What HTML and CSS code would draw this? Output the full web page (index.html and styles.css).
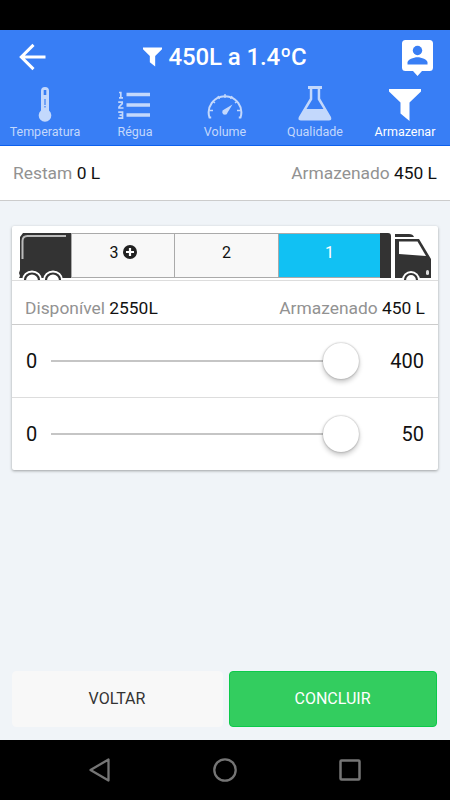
FILE: index.html
```html
<!DOCTYPE html>
<html lang="pt-BR">
<head>
<meta charset="utf-8">
<title>Armazenar</title>
<link rel="stylesheet" href="styles.css">
</head>
<body>
<div class="status"></div>
<header class="header">
  <div class="titlebar">
    <svg class="back" width="28" height="28" viewBox="0 0 28 28"><path d="M15.500 1.900 3.300 14l12.200 12.100M3.500 14h24" fill="none" stroke="#fff" stroke-width="3"/></svg>
    <h1 class="title"><svg width="19" height="20" viewBox="0 0 32 32"><path d="M0 0h32v3L20.500 14.500V32L11.500 25V14.500L0 3z" fill="#fff"/></svg><span>450L a 1.4ºC</span></h1>
    <svg class="account" width="32" height="37" viewBox="0 0 32 37"><path fill="#fff" d="M3.500 0h24Q31 0 31 3.500v24Q31 31 27.500 31H20l-4.500 5-4.500-5H3.500Q0 31 0 27.500v-24Q0 0 3.500 0z"/><circle cx="15.500" cy="10.500" r="4.700" fill="#387ef5"/><path fill="#387ef5" d="M5.500 24.500v-2c0-3 6-5.300 10-5.300s10 2.300 10 5.300v2z"/></svg>
  </div>
  <nav class="tabs">
    <a class="tab"><svg width="36" height="38" viewBox="0 0 36 38"><path fill="#c3d8fc" fill-rule="evenodd" d="M14 6a4 4 0 0 1 8 0v19.500a6.300 6.300 0 1 1-8 0zM16.700 5v5h2.600V5zM17.400 14v6h1.200v-6zM17.400 21v1.500h1.200V21z"/></svg><span>Temperatura</span></a>
    <a class="tab"><svg width="36" height="38" viewBox="0 0 36 38"><path d="M9.500 9.500H33M9.500 20H33M9.500 30H33" stroke="#c3d8fc" stroke-width="3.500"/><path d="M2 7.500h1.800V13M2 12.800h4M1.200 17.200h4v1.500L2 22v1h4.500M1.200 27.200H5.500v6H1.200M2.500 30.100h3" fill="none" stroke="#c3d8fc" stroke-width="1.700"/></svg><span>Régua</span></a>
    <a class="tab"><svg width="36" height="38" viewBox="0 0 36 38"><path d="M4.200 32.500H2.500A16.300 16.300 0 1 1 33.500 32.500H31.800" fill="none" stroke="#c3d8fc" stroke-width="2"/><path d="M2.500 25.500h3.500M5.500 16l2.500 2M11 11l1.500 2.800M18 9v4M25 11l-1.500 2.800M30.500 16l-2.500 2M33.500 25.500H30" stroke="#c3d8fc" stroke-width="1.400"/><path d="M25.500 19.500 20.600 27.500a2.700 2.700 0 1 1-3.500-3z" fill="#c3d8fc"/></svg><span>Volume</span></a>
    <a class="tab"><svg width="36" height="38" viewBox="0 0 36 38"><path fill="#c3d8fc" fill-rule="evenodd" d="M11 1h14v3h-1.800v9.500L34 32q1.200 3.500-2.200 3.500H4q-3.500 0-2.200-3.500L12.800 13.500V4H11zM15.300 4v10.500L9.500 24h17L20.700 14.500V4z"/></svg><span>Qualidade</span></a>
    <a class="tab active"><svg width="36" height="38" viewBox="0 0 36 38"><path d="M2 4h32v2.500L22.500 17.500V36L13.500 28.500V17.500L2 6.500z" fill="#fff"/></svg><span>Armazenar</span></a>
  </nav>
</header>
<section class="summary"><div>Restam <b>0 L</b></div><div>Armazenado <b>450 L</b></div></section>
<main class="content">
  <section class="card">
    <div class="truck">
      <svg width="52" height="47" viewBox="0 0 52 47"><path d="M4 0h48v45H0l1-2-1-3 1-3V4z" fill="#333"/><path d="M3.500 26V8q0-5 5-5H47" fill="none" stroke="#bbb" stroke-width="2"/><path d="M3 47a10 9.500 0 0 1 20 0zM24 47a10 9.500 0 0 1 20 0z" fill="#fff"/><path d="M6 47a7 6.500 0 0 1 14 0M27 47a7 6.500 0 0 1 14 0" fill="none" stroke="#333" stroke-width="2.200"/></svg>
      <div class="tanks">
        <div class="tank"><span>3</span><svg width="14" height="14" viewBox="0 0 14 14"><circle cx="7" cy="7" r="7" fill="#222"/><path d="M7 3v8M3 7h8" stroke="#fff" stroke-width="2.200"/></svg></div>
        <div class="tank">2</div>
        <div class="tank selected">1</div>
      </div>
      <svg width="52" height="47" viewBox="0 0 52 47"><path d="M0 0h8q3 0 3 3v42H0zM15 1h14q4 0 5 3H15z" fill="#333"/><path fill="#333" d="M15 6h24l12 20v19H15z"/><path d="M19 8.500h18.500l8.500 14.500L19 21z" fill="#fff"/><rect x="46" y="37" width="3" height="5" rx="1.500" fill="#ddd"/><path d="M22 47a9 9 0 0 1 18 0z" fill="#fff"/><path d="M25 47a6 6 0 0 1 12 0" fill="none" stroke="#333" stroke-width="2.200"/></svg>
    </div>
    <div class="available"><div>Disponível <b>2550L</b></div><div>Armazenado <b>450 L</b></div></div>
    <div class="range"><span>0</span><div class="track"><i class="thumb"></i></div><span class="value">400</span></div>
    <div class="range"><span>0</span><div class="track"><i class="thumb"></i></div><span class="value">50</span></div>
  </section>
  <div class="actions"><button class="button">VOLTAR</button><button class="button confirm">CONCLUIR</button></div>
</main>
<footer class="android">
  <svg width="24" height="26" viewBox="0 0 24 26"><path d="M20.500 2.500v21L2.500 13z" fill="none" stroke="#757575" stroke-width="2.300" stroke-linejoin="round"/></svg>
  <svg width="24" height="26" viewBox="0 0 24 26"><circle cx="12" cy="13" r="10.700" fill="none" stroke="#757575" stroke-width="2.300"/></svg>
  <svg width="24" height="26" viewBox="0 0 24 26"><rect x="2.500" y="3.500" width="19" height="19" rx="1" fill="none" stroke="#757575" stroke-width="2.500"/></svg>
</footer>
</body>
</html>
```
FILE: styles.css
```css
* { box-sizing: border-box; }
body {
  margin: 0;
  width: 450px;
  height: 800px;
  overflow: hidden;
  display: flex;
  flex-direction: column;
  font-family: Roboto, sans-serif;
  background: #f0f4f8;
  color: #111;
}
svg { display: block; flex: none; }
b { font-weight: 400; color: #111; }
.status { height: 30px; background: #000; }
.header { height: 116px; background: #387ef5; border-bottom: 1px solid #0c60ee; color: #fff; }
.titlebar {
  height: 55px;
  display: grid;
  grid-template-columns: 60px 1fr 60px;
  align-items: center;
}
.back { margin: -1px 0 0 18px; }
.account { margin: 2px 0 0 12px; }
.title {
  margin: -2px 0 0;
  display: flex;
  justify-content: center;
  align-items: center;
  gap: 6px;
  font-size: 24px;
  font-weight: 500;
  letter-spacing: -.1px;
}
.tabs { display: grid; grid-template-columns: repeat(5, 1fr); }
.tab {
  display: flex;
  flex-direction: column;
  align-items: center;
  font-size: 12.5px;
  line-height: 18px;
  color: #c3d8fc;
}
.tab.active { color: #fff; }
.summary, .available {
  display: flex;
  justify-content: space-between;
  align-items: center;
  font-size: 17.4px;
  color: #929292;
}
.summary { height: 55px; padding: 0 13px 1px; background: #fff; border-bottom: 1px solid #ccc; }
.content { height: 539px; padding: 25px 12px 13px; display: flex; flex-direction: column; justify-content: space-between; }
.card {
  height: 244px;
  background: #fff;
  border-radius: 2px;
  box-shadow: 0 1px 3px rgba(0, 0, 0, .35);
}
.truck { height: 55px; padding: 7px 6px 0 7px; display: flex; border-bottom: 1px solid #ddd; }
.tanks {
  flex: 1;
  height: 45px;
  display: grid;
  grid-template-columns: 102px 104px 1fr;
  border: 1px solid #aaa;
  border-right: 0;
}
.tank {
  display: flex;
  justify-content: center;
  align-items: center;
  gap: 4px;
  padding-bottom: 7px;
  background: #f8f8f8;
  font-size: 16px;
}
.tank + .tank { border-left: 1px solid #aaa; }
.tank.selected { background: #11c1f3; color: #fff; }
.available { height: 44px; padding: 10px 13px 0; border-bottom: 1px solid #ccc; }
.range {
  height: 72px;
  padding: 0 14px;
  display: grid;
  grid-template-columns: 25px 308px 1fr;
  align-items: center;
  font-size: 20px;
}
.range + .range { border-top: 1px solid #ddd; height: 73px; }
.track { height: 2px; display: flex; align-items: center; justify-content: flex-end; background: #c5c5c5; }
.thumb {
  flex: none;
  width: 36px;
  height: 36px;
  border-radius: 50%;
  background: #fff;
  box-shadow: 0 0 2px rgba(0, 0, 0, .35), 0 3px 5px rgba(0, 0, 0, .22);
}
.value { text-align: right; }
.actions { display: grid; grid-template-columns: 211px 208px; gap: 6px; }
.button {
  height: 56px;
  padding: 0 1px 2px 0;
  border: 1px solid #f8f8f8;
  border-radius: 4px;
  background: #f8f8f8;
  color: #333;
  font: 400 16px Roboto, sans-serif;
}
.button.confirm { border-color: #0cca4a; background: #33cd5f; color: #fff; }
.android {
  height: 60px;
  padding: 0 88px;
  display: flex;
  justify-content: space-between;
  align-items: center;
  background: #000;
}
```
